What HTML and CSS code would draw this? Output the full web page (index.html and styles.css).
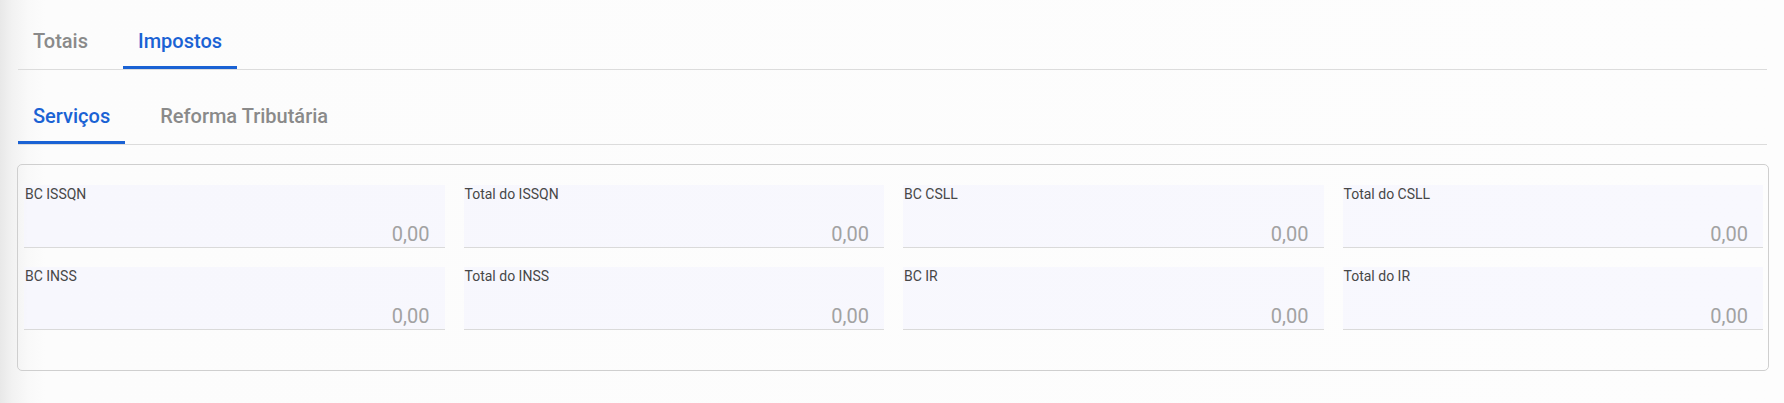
FILE: index.html
```html
<!DOCTYPE html>
<html lang="pt-BR">
<head>
<meta charset="utf-8">
<title>Impostos</title>
<link rel="stylesheet" href="styles.css">
</head>
<body>
<div class="page">
  <nav class="tabs tabs-main">
    <div class="tab">Totais</div>
    <div class="tab active">Impostos</div>
  </nav>
  <nav class="tabs tabs-sub">
    <div class="tab active">Serviços</div>
    <div class="tab">Reforma Tributária</div>
  </nav>
  <section class="card">
    <div class="grid">
      <div class="field"><label class="label">BC ISSQN</label><div class="value">0,00</div></div>
      <div class="field"><label class="label">Total do ISSQN</label><div class="value">0,00</div></div>
      <div class="field"><label class="label">BC CSLL</label><div class="value">0,00</div></div>
      <div class="field"><label class="label">Total do CSLL</label><div class="value">0,00</div></div>
      <div class="field"><label class="label">BC INSS</label><div class="value">0,00</div></div>
      <div class="field"><label class="label">Total do INSS</label><div class="value">0,00</div></div>
      <div class="field"><label class="label">BC IR</label><div class="value">0,00</div></div>
      <div class="field"><label class="label">Total do IR</label><div class="value">0,00</div></div>
    </div>
  </section>
</div>
</body>
</html>
```

FILE: styles.css
```css
html, body {
  margin: 0;
  height: 100%;
}
body {
  font-family: Roboto, "Liberation Sans", Arial, sans-serif;
  background: linear-gradient(to right, #e8e8e8 0px, #f2f2f2 12px, #f9f9f9 28px, #fcfcfc 45px, #fdfdfd 100%);
  color: #333;
}
.page {
  padding: 16px 15px 0 17px;
}
.tabs {
  display: flex;
  gap: 20px;
  margin: 0 2px 0 1px;
  border-bottom: 1px solid #dcdcdc;
}
.tabs-sub {
  margin-top: 21px;
}
.tab {
  padding: 13px 15px;
  line-height: 24px;
  font-size: 20px;
  font-weight: 500;
  color: #8a8a8a;
  border-bottom: 3px solid transparent;
}
.tab.active {
  color: #1a62d4;
  border-bottom-color: #1a62d4;
}
.card {
  margin-top: 19px;
  border: 1px solid #cfcfcf;
  border-radius: 5px;
  padding: 20px 5px 40px 6px;
}
.grid {
  display: grid;
  grid-template-columns: repeat(4, 1fr);
  column-gap: 19px;
  row-gap: 19px;
}
.field {
  display: flex;
  flex-direction: column;
  height: 63px;
  box-sizing: border-box;
  background: rgba(246, 246, 253, 0.75);
  border-bottom: 1px solid #dadada;
}
.label {
  font-size: 14px;
  line-height: 16px;
  font-weight: 400;
  color: #474747;
  padding: 1px 0 0 1px;
}
.value {
  margin-top: auto;
  text-align: right;
  font-size: 20px;
  line-height: 24px;
  color: #a2a2a2;
  padding: 0 15px 1px 0;
}
```
